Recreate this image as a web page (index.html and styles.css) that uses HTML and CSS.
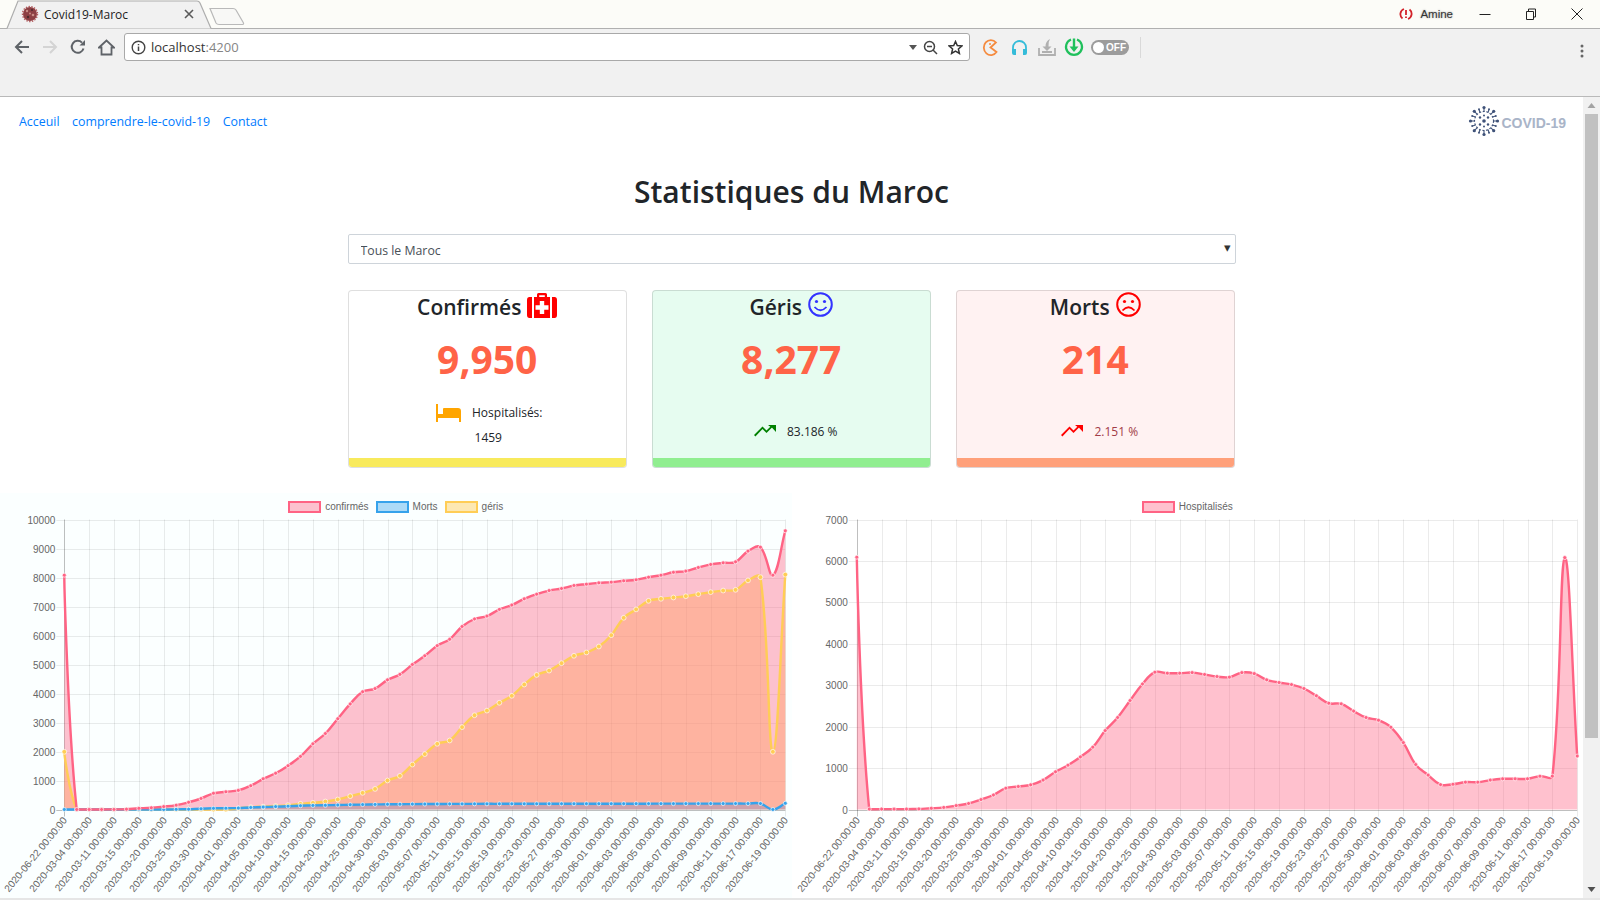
FILE: index.html
```html
<!DOCTYPE html>
<html lang="fr">
<head>
    <title>Covid19-Maroc</title>
    <meta charset="utf-8" />
    <link rel="stylesheet" href="styles.css">
</head>
<body>
    <div class="tabstrip">
        <div class="tab">
            <svg class="tab-shape" width="212" height="29" viewBox="0 0 212 29"><path d="M7 28.5 L18 1 H197 Q199 1 200 3 L211 28.5" fill="#f1f1f1" stroke="#aeaeae" stroke-width="1.2"/></svg>
            <svg class="favicon" width="18" height="18" viewBox="0 0 18 18"><circle cx="9" cy="9" r="7" fill="#8d3f43"/><circle cx="9" cy="9" r="7.5" fill="none" stroke="#b35a5c" stroke-width="1.4" stroke-dasharray="1.4 1.4"/><circle cx="6" cy="6" r="1.2" fill="#c98c86"/><circle cx="11" cy="5" r="1" fill="#4c2a2e"/><circle cx="12" cy="10" r="1.3" fill="#c98c86"/><circle cx="7" cy="12" r="1.2" fill="#4c2a2e"/><circle cx="9" cy="8.5" r="1" fill="#c98c86"/></svg>
            <span class="tab-title">Covid19-Maroc</span>
            <svg class="tab-close" width="10" height="10" viewBox="0 0 10 10"><path d="M1 1 L9 9 M9 1 L1 9" stroke="#5a5a5a" stroke-width="1.6"/></svg>
        </div>
        <svg class="newtab" width="36" height="19" viewBox="0 0 36 19"><path d="M1 1.5 H24 Q26 1.5 27 3 L34.5 16 Q35 17.5 33 17.5 H10 Q8 17.5 7 16 Z" fill="#f8f8f6" stroke="#b9b9b9" stroke-width="1.2"/></svg>
        <div class="account">
            <svg width="14" height="14" viewBox="0 0 14 14"><path d="M5 2 A5.5 5.5 0 0 0 3.500 11.500 M9 12 A5.5 5.500 0 0 0 10.500 2.500" fill="none" stroke="#d3232a" stroke-width="1.800"/><path d="M7 3 V8 M7 9.500 V11" stroke="#d3232a" stroke-width="1.800"/></svg>
            <span class="account-name">Amine</span>
        </div>
        <div class="winctl">
            <svg width="12" height="12" viewBox="0 0 12 12"><path d="M0.500 6.500 H11.500" stroke="#222" stroke-width="1"/></svg>
            <svg width="12" height="12" viewBox="0 0 12 12"><path d="M1.500 3.500 H8.500 V11.500 H1.500 Z M3.500 3.500 V1 H10.500 V9 H8.500" fill="none" stroke="#222" stroke-width="1"/></svg>
            <svg width="12" height="12" viewBox="0 0 12 12"><path d="M0.500 0.500 L11.500 11.500 M11.500 0.500 L0.500 11.500" stroke="#222" stroke-width="1"/></svg>
        </div>
    </div>

    <div class="toolbar">
        <div class="tool"><svg width="16" height="16" viewBox="0 0 16 16"><path d="M15 8 H2 M8 2 L2 8 L8 14" fill="none" stroke="#5f6368" stroke-width="2"/></svg></div>
        <div class="tool"><svg width="16" height="16" viewBox="0 0 16 16"><path d="M1 8 H14 M8 2 L14 8 L8 14" fill="none" stroke="#d4d4d4" stroke-width="2"/></svg></div>
        <div class="tool"><svg width="16" height="16" viewBox="0 0 16 16"><path d="M13.500 9.500 A6 6 0 1 1 12 3.600" fill="none" stroke="#5f6368" stroke-width="2"/><path d="M9.500 6.500 H15 V1 Z" fill="#5f6368"/></svg></div>
        <div class="tool"><svg width="17" height="17" viewBox="0 0 17 17"><path d="M1 8.500 L8.500 1.500 L16 8.500 H13.500 V15.500 H3.500 V8.500 Z" fill="none" stroke="#5f6368" stroke-width="1.800"/></svg></div>
        <div class="address">
            <svg class="info" width="15" height="15" viewBox="0 0 15 15"><circle cx="7.500" cy="7.500" r="6.300" fill="none" stroke="#444" stroke-width="1.400"/><path d="M7.500 6.500 V11 M7.500 4 V5.300" stroke="#444" stroke-width="1.500"/></svg>
            <span class="url">localhost<span class="url-port">:4200</span></span>
            <div class="address-end">
                <svg width="8" height="5" viewBox="0 0 8 5"><path d="M0 0 H8 L4 5 Z" fill="#555"/></svg>
                <svg class="zoomglass" width="15" height="15" viewBox="0 0 15 15"><circle cx="6.500" cy="6.500" r="5" fill="none" stroke="#444" stroke-width="1.500"/><path d="M4 6.500 H9 M10 10 L14 14" stroke="#444" stroke-width="1.500"/></svg>
                <svg class="star" width="15" height="15" viewBox="0 0 15 15"><path d="M7.500 1.500 L9.300 5.600 L13.800 6 L10.400 9 L11.400 13.400 L7.500 11.100 L3.600 13.400 L4.600 9 L1.200 6 L5.700 5.600 Z" fill="none" stroke="#333" stroke-width="1.500"/></svg>
            </div>
        </div>
        <div class="extensions">
            <svg width="16" height="17" viewBox="0 0 16 17"><path d="M14 3.500 A7 7.500 0 1 0 14.500 13 L8.500 8.500 Z" fill="none" stroke="#f58b3f" stroke-width="1.800"/><circle cx="8" cy="5" r="1" fill="#f58b3f"/></svg>
            <svg class="ext-phones" width="17" height="17" viewBox="0 0 17 17"><path d="M2 12 V8.500 A6.500 6.500 0 0 1 15 8.500 V12" fill="none" stroke="#35bcd9" stroke-width="1.800"/><path d="M1 11 Q1 10 2.500 10 H5 V16 H3 Q1 16 1 14 Z M16 11 Q16 10 14.500 10 H12 V16 H14 Q16 16 16 14 Z" fill="#35bcd9"/></svg>
            <svg class="ext-down" width="18" height="18" viewBox="0 0 18 18"><path d="M1 10 V17 H17 V10 M4 14 H14" fill="none" stroke="#b0b0b0" stroke-width="1.800"/><path d="M9 13 L4.500 8.500 H7.500 Q7.500 3 12 1 Q10 4 10.500 8.500 H13.500 Z" fill="#b0b0b0"/></svg>
            <svg class="ext-green" width="20" height="20" viewBox="0 0 20 20"><path d="M7 2.500 A8 8 0 1 0 13 2.500" fill="none" stroke="#20c05c" stroke-width="2.200"/><path d="M10 1.500 V13" stroke="#20c05c" stroke-width="2.400"/><path d="M5.500 9.500 H14.500 L10 15 Z" fill="#20c05c"/></svg>
            <div class="toggle"><span class="toggle-knob"></span><span class="toggle-text">OFF</span></div>
            <span class="ext-divider"></span>
        </div>
        <svg class="menu-dots" width="4" height="14" viewBox="0 0 4 14"><circle cx="2" cy="2" r="1.500" fill="#666"/><circle cx="2" cy="7" r="1.500" fill="#666"/><circle cx="2" cy="12" r="1.500" fill="#666"/></svg>
    </div>

    <div class="page">
        <div class="content">
            <nav class="topnav">
                <div class="navlinks">
                    <a href="#">Acceuil</a>
                    <a href="#">comprendre-le-covid-19</a>
                    <a href="#">Contact</a>
                </div>
                <div class="logo">
                    <svg width="32" height="32" viewBox="0 0 32 32">
                        <g fill="none" stroke="#3f5279" stroke-width="1.100">
                            <circle cx="16" cy="16" r="9.500" stroke-dasharray="2 1.600"/>
                            <path d="M16 6.500 V3 M16 25.500 V29 M6.500 16 H3 M25.500 16 H29 M9.300 9.300 L6.800 6.800 M22.700 9.300 L25.200 6.800 M9.300 22.700 L6.800 25.200 M22.700 22.700 L25.200 25.200"/>
                            <path d="M12 7.500 L11 4.500 M20 7.500 L21 4.500 M7.500 12 L4.500 11 M7.500 20 L4.500 21 M24.500 12 L27.500 11 M24.500 20 L27.500 21 M12 24.500 L11 27.500 M20 24.500 L21 27.500"/>
                        </g>
                        <g fill="#3f5279">
                            <circle cx="16" cy="2.500" r="1.600"/><circle cx="16" cy="29.500" r="1.600"/><circle cx="2.500" cy="16" r="1.600"/><circle cx="29.500" cy="16" r="1.600"/>
                            <circle cx="6.300" cy="6.300" r="1.600"/><circle cx="25.700" cy="6.300" r="1.600"/><circle cx="6.300" cy="25.700" r="1.600"/><circle cx="25.700" cy="25.700" r="1.600"/>
                            <circle cx="11" cy="4.200" r="1"/><circle cx="21" cy="4.200" r="1"/><circle cx="4.200" cy="11" r="1"/><circle cx="4.200" cy="21" r="1"/><circle cx="27.800" cy="11" r="1"/><circle cx="27.800" cy="21" r="1"/><circle cx="11" cy="27.800" r="1"/><circle cx="21" cy="27.800" r="1"/>
                            <circle cx="16" cy="16" r="1.800"/><circle cx="12" cy="12.500" r="1.200"/><circle cx="20" cy="12.500" r="1.200"/><circle cx="12" cy="19.500" r="1.200"/><circle cx="20" cy="19.500" r="1.200"/><circle cx="16" cy="10.500" r="1"/><circle cx="16" cy="21.500" r="1"/>
                        </g>
                    </svg>
                    <span class="logo-text">COVID-19</span>
                </div>
            </nav>

            <h1 class="page-title">Statistiques du Maroc</h1>

            <div class="region-select">
                <select>
                    <option>Tous le Maroc</option>
                </select>
            </div>

            <div class="cards">
                <div class="card">
                    <div class="card-title">Confirmés
                        <svg class="title-icon" width="30" height="26" viewBox="0 0 30 26"><path d="M10 5 V2.500 Q10 1 11.500 1 H18.500 Q20 1 20 2.500 V5 H17.800 V3.200 H12.200 V5 Z" fill="#f00"/><path d="M7 5 H23 V26 H7 Z M2.500 5 H5 V26 H2.500 Q0 26 0 23 V8 Q0 5 2.500 5 Z M25 5 H27.500 Q30 5 30 8 V23 Q30 26 27.500 26 H25 Z" fill="#f00"/><path d="M12.800 9 H17.200 V13.300 H21.500 V17.700 H17.200 V22 H12.800 V17.700 H8.500 V13.300 H12.800 Z" fill="#fff"/></svg>
                    </div>
                    <div class="card-num">9,950</div>
                    <div class="card-foot foot-hosp">
                        <div class="foot-row">
                            <svg width="25" height="18" viewBox="0 0 25 18"><path d="M0 0 H2 V10 H7 V5 Q7 4 8 4 H22 Q25 4 25 7 V18 H23 V14 H2 V18 H0 Z" fill="#ffa500"/></svg>
                            <span>Hospitalisés:</span>
                        </div>
                        <div class="foot-line">1459</div>
                    </div>
                    <div class="band band-yellow"></div>
                </div>
                <div class="card card-green">
                    <div class="card-title">Géris
                        <svg class="title-icon" width="25" height="25" viewBox="0 0 25 25"><circle cx="12.500" cy="12.500" r="11.300" fill="none" stroke="#3333ff" stroke-width="2"/><circle cx="8.500" cy="9.500" r="1.600" fill="#3333ff"/><circle cx="16.500" cy="9.500" r="1.600" fill="#3333ff"/><path d="M6.500 15 Q12.500 21.500 18.500 15" fill="none" stroke="#3333ff" stroke-width="1.800"/></svg>
                    </div>
                    <div class="card-num">8,277</div>
                    <div class="card-foot foot-rate">
                        <div class="foot-row">
                            <svg width="22" height="14" viewBox="0 0 22 14"><path d="M15.500 0 L18 2.500 L12.500 8 L8.500 4 L1.400 11.500 L0 10 L8.500 1.500 L12.500 5.500 L16.300 1.800 L14 0 H22 V7 Z" fill="#008000"/></svg>
                            <span>83.186 %</span>
                        </div>
                    </div>
                    <div class="band band-green"></div>
                </div>
                <div class="card card-red">
                    <div class="card-title">Morts
                        <svg class="title-icon" width="25" height="25" viewBox="0 0 25 25"><circle cx="12.500" cy="12.500" r="11.300" fill="none" stroke="#f00" stroke-width="2"/><circle cx="8.500" cy="9.500" r="1.600" fill="#f00"/><circle cx="16.500" cy="9.500" r="1.600" fill="#f00"/><path d="M6.500 18.500 Q12.500 12 18.500 18.500" fill="none" stroke="#f00" stroke-width="1.800"/></svg>
                    </div>
                    <div class="card-num">214</div>
                    <div class="card-foot foot-rate foot-dead">
                        <div class="foot-row">
                            <svg width="22" height="14" viewBox="0 0 22 14"><path d="M15.500 0 L18 2.500 L12.500 8 L8.500 4 L1.400 11.500 L0 10 L8.500 1.500 L12.500 5.500 L16.300 1.800 L14 0 H22 V7 Z" fill="#f00"/></svg>
                            <span>2.151 %</span>
                        </div>
                    </div>
                    <div class="band band-salmon"></div>
                </div>
            </div>

            <div class="charts">
                <div class="chart chart-tinted" id="chart-cases"></div>
                <div class="chart" id="chart-hosp"></div>
            </div>
        </div>
        <div class="scrollbar">
            <svg width="17" height="17" viewBox="0 0 17 17"><path d="M4.500 11 L8.500 6 L12.500 11 Z" fill="#a3a3a3"/></svg>
            <div class="scroll-thumb"></div>
            <svg class="scroll-down" width="17" height="17" viewBox="0 0 17 17"><path d="M4.500 6 L8.500 11 L12.500 6 Z" fill="#505050"/></svg>
        </div>
    </div>
    <div class="hbar"></div>

    <script src="charts.js"></script>
</body>
</html>
```

FILE: styles.css
```css
* { box-sizing: border-box; }
html, body { margin: 0; padding: 0; height: 900px; overflow: hidden; background: #fff; }
body { font-family: "Open Sans", "Liberation Sans", sans-serif; color: #212529; }

/* browser frame */
.tabstrip { height: 29px; background: #fcfcf8; border-bottom: 1px solid #b0b0b0; display: flex; align-items: flex-start; position: relative; }
.tab { width: 212px; height: 29px; position: relative; display: flex; align-items: center; padding: 0 0 1px 21px; }
.tab-shape { position: absolute; left: 0; top: 0; }
.favicon, .tab-title, .tab-close { position: relative; }
.tab-title { font-size: 12px; margin-left: 5px; color: #222; width: 140px; }
.newtab { margin: 7px 0 0 -3px; }
.account { margin-left: auto; display: flex; align-items: center; gap: 7px; height: 28px; }
.account-name { font-family: "Liberation Sans", sans-serif; font-size: 11.500px; color: #333; text-shadow: 0 0 2px #999; }
.winctl { display: flex; gap: 34px; margin: 8px 17px 0 26px; }

.toolbar { height: 68px; background: #f1f1f1; border-bottom: 1px solid #b9b9b9; display: flex; align-items: flex-start; padding: 4px 0 0 8px; }
.tool { width: 28px; height: 28px; display: flex; align-items: center; justify-content: center; }
.address { width: 846px; height: 28px; margin-left: 4px; background: #fff; border: 1px solid #a9a9a9; border-radius: 3px; display: flex; align-items: center; padding: 0 6px 0 6px; }
.url { font-size: 13px; margin-left: 5px; color: #333; }
.url-port { color: #858585; }
.address-end { margin-left: auto; display: flex; align-items: center; }
.zoomglass { margin-left: 6px; }
.star { margin-left: 10px; }
.extensions { display: flex; align-items: center; height: 28px; margin-left: 12px; }
.ext-phones { margin-left: 13px; }
.ext-down { margin-left: 10px; }
.ext-green { margin-left: 8px; }
.toggle { width: 38px; height: 15px; margin-left: 7px; border-radius: 8px; background: #9c9c9c; display: flex; align-items: center; padding-left: 2px; }
.toggle-knob { width: 11px; height: 11px; border-radius: 50%; background: #fff; }
.toggle-text { font-family: "Liberation Sans", sans-serif; font-size: 10px; font-weight: bold; color: #fff; margin-left: 2px; }
.ext-divider { width: 1px; height: 21px; background: #d9d9d9; margin-left: 11px; }
.menu-dots { margin: 11px 16px 0 auto; }

/* page */
.page { display: flex; height: 801px; }
.content { width: 1583px; height: 801px; overflow: hidden; }
.topnav { display: flex; justify-content: space-between; align-items: center; height: 48px; padding: 0 17px 0 19px; }
.navlinks { display: flex; gap: 12.500px; font-size: 12.400px; }
.navlinks a { color: #007bff; text-decoration: none; }
.logo { display: flex; align-items: center; gap: 1px; }
.logo-text { font-family: "Liberation Sans", sans-serif; font-size: 14px; font-weight: bold; color: #a9b4c8; margin-top: 4px; }

.page-title { font-size: 30px; font-weight: 600; text-align: center; margin: 0; height: 89px; padding-top: 25px; line-height: 43px; }

.region-select { width: 888px; margin: 0 auto; position: relative; }
.region-select select { width: 100%; height: 30px; padding: 2px 12px 0; font: 12.300px "Open Sans", sans-serif; color: #495057; background: #fff; border: 1px solid #ced4da; border-radius: 2px; appearance: none; -webkit-appearance: none; }
.region-select::after { content: "▾"; position: absolute; right: 5px; top: 4px; font-size: 13px; color: #333; }

.cards { width: 888px; margin: 26px auto 0; display: grid; grid-template-columns: repeat(3, 279.500px); column-gap: 24.500px; }
.card { height: 178px; border: 1px solid rgba(0, 0, 0, 0.125); border-radius: 4px; display: flex; flex-direction: column; overflow: hidden; background: #fff; }
.card-green { background: #e6fcf0; }
.card-red { background: #fff2f2; }
.card-title { display: flex; justify-content: center; align-items: flex-start; gap: 6px; font-size: 21px; font-weight: 600; line-height: 32px; height: 50px; }
.title-icon { margin-top: 1px; }
.card-num { font-size: 39px; font-weight: 700; color: #ff6347; text-align: center; line-height: 50px; height: 50px; margin-top: -7px; }
.card-foot { flex: 1; display: flex; flex-direction: column; justify-content: flex-end; align-items: center; font-size: 12px; }
.foot-row { display: flex; align-items: flex-start; gap: 11px; }
.foot-hosp { padding-bottom: 12px; }
.foot-hosp .foot-row { margin-left: 4px; }
.foot-line { margin-top: 7px; margin-left: 2px; line-height: 17px; }
.foot-rate { padding-bottom: 18px; padding-left: 9px; }
.foot-rate .foot-row { align-items: center; }
.foot-rate svg { margin-top: 1px; }
.foot-dead { color: #a23c47; }
.band { height: 10px; flex: none; margin-bottom: -1px; }
.band-yellow { background: #f8ea5c; }
.band-green { background: #90ee90; }
.band-salmon { background: #ffa07a; }

.charts { display: grid; grid-template-columns: 791.500px 791.500px; margin-top: 25px; }
.chart { height: 405px; padding-top: 8px; }
.chart-tinted { background: #fbffff; }
.legend { display: flex; justify-content: center; gap: 7px; height: 12px; font-family: "Liberation Sans", sans-serif; font-size: 10px; color: #666; }
.legend-item { display: flex; align-items: flex-start; gap: 4px; line-height: 12px; }
.legend-box { width: 33px; height: 12px; border: 2px solid; }
.chart svg { display: block; }
.chart text { font-family: "Liberation Sans", sans-serif; font-size: 10px; fill: #666; }

.scrollbar { width: 17px; height: 801px; background: #f1f1f1; display: flex; flex-direction: column; align-items: center; }
.scroll-thumb { width: 13px; height: 624px; background: #c1c1c1; }
.scroll-down { margin-top: auto; }
.hbar { height: 2px; background: #e6e6e6; }
```

FILE: charts.js
```js
var labels = ["2020-06-22", "2020-03-04", "2020-03-11", "2020-03-15", "2020-03-20", "2020-03-25", "2020-03-30", "2020-04-01", "2020-04-05", "2020-04-10",
    "2020-04-15", "2020-04-20", "2020-04-25", "2020-04-30", "2020-05-03", "2020-05-07", "2020-05-11", "2020-05-15", "2020-05-19", "2020-05-23",
    "2020-05-27", "2020-05-30", "2020-06-01", "2020-06-03", "2020-06-05", "2020-06-07", "2020-06-09", "2020-06-11", "2020-06-17", "2020-06-19"];

var confirmes = [8080, 1, 1, 1, 2, 12, 40, 60, 100, 150, 250, 380, 560, 610, 660, 820, 1060, 1250, 1510, 1830,
    2265, 2620, 3130, 3640, 4060, 4170, 4470, 4660, 5000, 5300, 5650, 5870, 6310, 6570, 6670, 6900, 7050, 7265, 7425, 7550,
    7620, 7725, 7770, 7815, 7840, 7885, 7920, 8010, 8080, 8180, 8220, 8345, 8450, 8505, 8540, 8910, 9045, 8080, 9610];
var morts = [0, 0, 0, 0, 0, 0, 0, 0, 0, 5, 10, 25, 40, 45, 50, 70, 85, 100, 115, 130,
    140, 145, 155, 165, 170, 175, 180, 183, 186, 188, 190, 192, 193, 194, 195, 195, 196, 196, 197, 197,
    198, 198, 199, 199, 200, 200, 201, 201, 202, 202, 203, 203, 204, 204, 205, 205, 206, 0, 214];
var geris = [1990, 0, 0, 0, 0, 0, 0, 0, 0, 0, 0, 0, 0, 0, 40, 80, 100, 120, 150, 195,
    230, 275, 345, 460, 575, 710, 1000, 1160, 1550, 1910, 2265, 2380, 2840, 3250, 3410, 3680, 3920, 4310, 4640, 4790,
    5045, 5300, 5415, 5620, 6010, 6610, 6900, 7195, 7265, 7310, 7355, 7425, 7495, 7550, 7575, 7900, 8010, 1990, 8100];
var hospitalises = [6090, 10, 10, 10, 10, 15, 30, 50, 95, 145, 240, 350, 515, 555, 595, 710, 910, 1070, 1270, 1505,
    1905, 2220, 2630, 3030, 3315, 3290, 3290, 3305, 3260, 3210, 3195, 3305, 3280, 3130, 3065, 3015, 2920, 2745, 2565, 2550,
    2375, 2220, 2155, 1985, 1615, 1085, 830, 600, 610, 660, 660, 710, 740, 740, 740, 805, 805, 6080, 1290];

var PINK = "255,99,132", BLUE = "54,162,235", YELLOW = "255,205,86";
var SVG_NS = "http://www.w3.org/2000/svg";

function el(name, attrs, parent) {
    var node = document.createElementNS(SVG_NS, name);
    for (var key in attrs) {
        node.setAttribute(key, attrs[key]);
    }
    parent.appendChild(node);
    return node;
}

// same curve as a chart line with tension 0.4
function curve(pts, bottom) {
    var d = "M" + pts[0].x + " " + pts[0].y;
    var t = 0.4, prevCtl = pts[0];
    for (var i = 1; i < pts.length; i++) {
        var cur = pts[i], prev = pts[i - 1], next = pts[Math.min(i + 1, pts.length - 1)];
        var d1 = Math.hypot(cur.x - prev.x, cur.y - prev.y), d2 = Math.hypot(next.x - cur.x, next.y - cur.y);
        var sum = (d1 + d2) || 1;
        var dx = next.x - prev.x, dy = next.y - prev.y;
        var c1x = cur.x - t * d1 / sum * dx, c1y = Math.min(cur.y - t * d1 / sum * dy, bottom);
        d += " C" + prevCtl.x.toFixed(1) + " " + prevCtl.y.toFixed(1) + " " + c1x.toFixed(1) + " " + c1y.toFixed(1) + " " + cur.x.toFixed(1) + " " + cur.y.toFixed(1);
        prevCtl = { x: cur.x + t * d2 / sum * dx, y: Math.min(cur.y + t * d2 / sum * dy, bottom) };
    }
    return d;
}

function drawChart(id, opts) {
    var box = document.getElementById(id);

    var legend = document.createElement("div"); // legend sits above the plot
    legend.className = "legend";
    opts.sets.forEach(function (set) {
        var item = document.createElement("div");
        item.className = "legend-item";
        var swatch = document.createElement("span");
        swatch.className = "legend-box";
        swatch.style.background = "rgba(" + set.color + "," + set.alpha + ")";
        swatch.style.borderColor = "rgb(" + set.color + ")";
        item.appendChild(swatch);
        item.appendChild(document.createTextNode(set.name));
        legend.appendChild(item);
    });
    box.appendChild(legend);

    var left = opts.left, right = opts.right, top = 6.5, bottom = 296.5;
    var svg = el("svg", { width: 791.5, height: 385, viewBox: "0 0 791.5 385" }, box);
    var stepX = (right - left) / 58;

    function px(i) { return left + i * stepX; }
    function py(v) { return bottom - (bottom - top) * v / opts.max; }

    // grid
    for (var v = 0; v <= opts.max; v += 1000) {
        var y = Math.round(py(v)) + 0.5;
        el("line", { x1: left - 8, x2: right, y1: y, y2: y, stroke: v === 0 ? "rgba(0,0,0,0.25)" : "rgba(0,0,0,0.08)" }, svg);
        var lab = el("text", { x: left - 9, y: y + 3, "text-anchor": "end" }, svg);
        lab.textContent = v;
    }
    labels.forEach(function (name, n) {
        var x = Math.round(px(n * 2)) + 0.5;
        el("line", { x1: x, x2: x, y1: top, y2: bottom + 7, stroke: n === 0 ? "rgba(0,0,0,0.25)" : "rgba(0,0,0,0.08)" }, svg);
        var ax = x + 3, ay = bottom + 11;
        var lab = el("text", { x: ax, y: ay, "text-anchor": "end", transform: "rotate(-51 " + ax + " " + ay + ")" }, svg);
        lab.textContent = name + " 00:00:00";
    });

    // fills go down first, last dataset at the bottom
    var s, set, lines = [];
    for (s = opts.sets.length - 1; s >= 0; s--) {
        set = opts.sets[s];
        var pts = set.data.map(function (val, i) { return { x: px(i), y: py(val) }; });
        var line = curve(pts, bottom);
        lines.push({ set: set, pts: pts, line: line });
        el("path", { d: line + " L" + right + " " + bottom + " L" + left + " " + bottom + " Z", fill: "rgba(" + set.color + "," + set.alpha + ")" }, svg);
    }
    // then lines and dots over all the fills
    lines.forEach(function (item) {
        el("path", { d: item.line, fill: "none", stroke: "rgb(" + item.set.color + ")", "stroke-width": 2.4 }, svg);
        item.pts.forEach(function (p) {
            el("circle", { cx: p.x, cy: p.y, r: item.set.dot, fill: "rgb(" + item.set.color + ")", stroke: "rgba(255,255,255,0.65)", "stroke-width": 1 }, svg);
        });
    });
}

drawChart("chart-cases", {
    left: 64.3, right: 785.3, max: 10000,
    sets: [
        { name: "confirmés", data: confirmes, color: PINK, alpha: 0.4, dot: 2 },
        { name: "Morts", data: morts, color: BLUE, alpha: 0.4, dot: 2 },
        { name: "géris", data: geris, color: YELLOW, alpha: 0.45, dot: 2.4 }
    ]
});

drawChart("chart-hosp", {
    left: 64.8, right: 785.2, max: 7000,
    sets: [
        { name: "Hospitalisés", data: hospitalises, color: PINK, alpha: 0.4, dot: 2 }
    ]
});
```
